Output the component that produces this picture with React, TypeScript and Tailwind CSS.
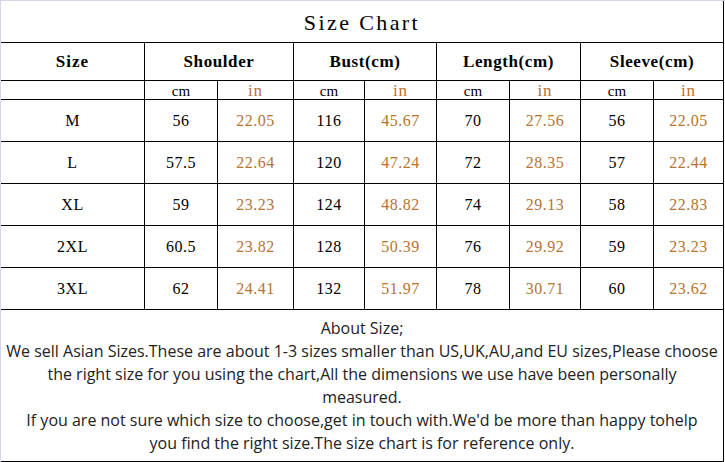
import React from 'react';

const rows = [
  ['M', '56', '22.05', '116', '45.67', '70', '27.56', '56', '22.05'],
  ['L', '57.5', '22.64', '120', '47.24', '72', '28.35', '57', '22.44'],
  ['XL', '59', '23.23', '124', '48.82', '74', '29.13', '58', '22.83'],
  ['2XL', '60.5', '23.82', '128', '50.39', '76', '29.92', '59', '23.23'],
  ['3XL', '62', '24.41', '132', '51.97', '78', '30.71', '60', '23.62'],
];

const groups = ['Shoulder', 'Bust(cm)', 'Length(cm)', 'Sleeve(cm)'];

const cell = 'flex items-center justify-center border-r border-b border-black';

const App = () => {
  return (
    <div className="w-[725px] h-[462px] bg-white border-t border-l border-[#d6d6e8] overflow-hidden">
      <div className="w-[723px] grid grid-cols-[144px_73px_76px_71px_72px_73px_71px_73px_70px] grid-rows-[42px_38px_19px_42px_42px_42px_42px_42px_152px] font-['Liberation_Serif',serif] text-black">
        {/* title */}
        <div className={`${cell} col-span-9 text-[22px] tracking-[2.4px] pt-[2px]`}>Size Chart</div>

        {/* header */}
        <div className={`${cell} text-[17px] font-bold tracking-[1px]`}>Size</div>
        {groups.map((g) => (
          <div key={g} className={`${cell} col-span-2 text-[17px] font-bold tracking-[0.6px]`}>
            {g}
          </div>
        ))}

        {/* units */}
        <div className={cell}></div>
        {groups.map((g) => (
          <React.Fragment key={g}>
            <div className={`${cell} text-[15px] leading-none pt-[2px]`}>cm</div>
            <div className={`${cell} text-[17px] leading-none pt-[1px] tracking-[1px] text-[#b8732f]`}>in</div>
          </React.Fragment>
        ))}

        {/* data */}
        {rows.map((r) =>
          r.map((v, i) => (
            <div
              key={r[0] + i}
              className={`${cell} text-[16px] tracking-[0.5px] ${i > 0 && i % 2 === 0 ? 'text-[#b8732f]' : 'text-black'}`}
            >
              {v}
            </div>
          ))
        )}

        {/* notes */}
        <div className={`${cell} col-span-9 flex-col text-center font-['Open_Sans',sans-serif] text-[16px] leading-[23px] text-[#222] whitespace-nowrap`}>
          <p>About Size;</p>
          <p>We sell Asian Sizes.These are about 1-3 sizes smaller than US,UK,AU,and EU sizes,Please choose</p>
          <p>the right size for you using the chart,All the dimensions we use have been personally</p>
          <p>measured.</p>
          <p>If you are not sure which size to choose,get in touch with.We'd be more than happy tohelp</p>
          <p>you find the right size.The size chart is for reference only.</p>
        </div>
      </div>
    </div>
  );
};

export default App;
